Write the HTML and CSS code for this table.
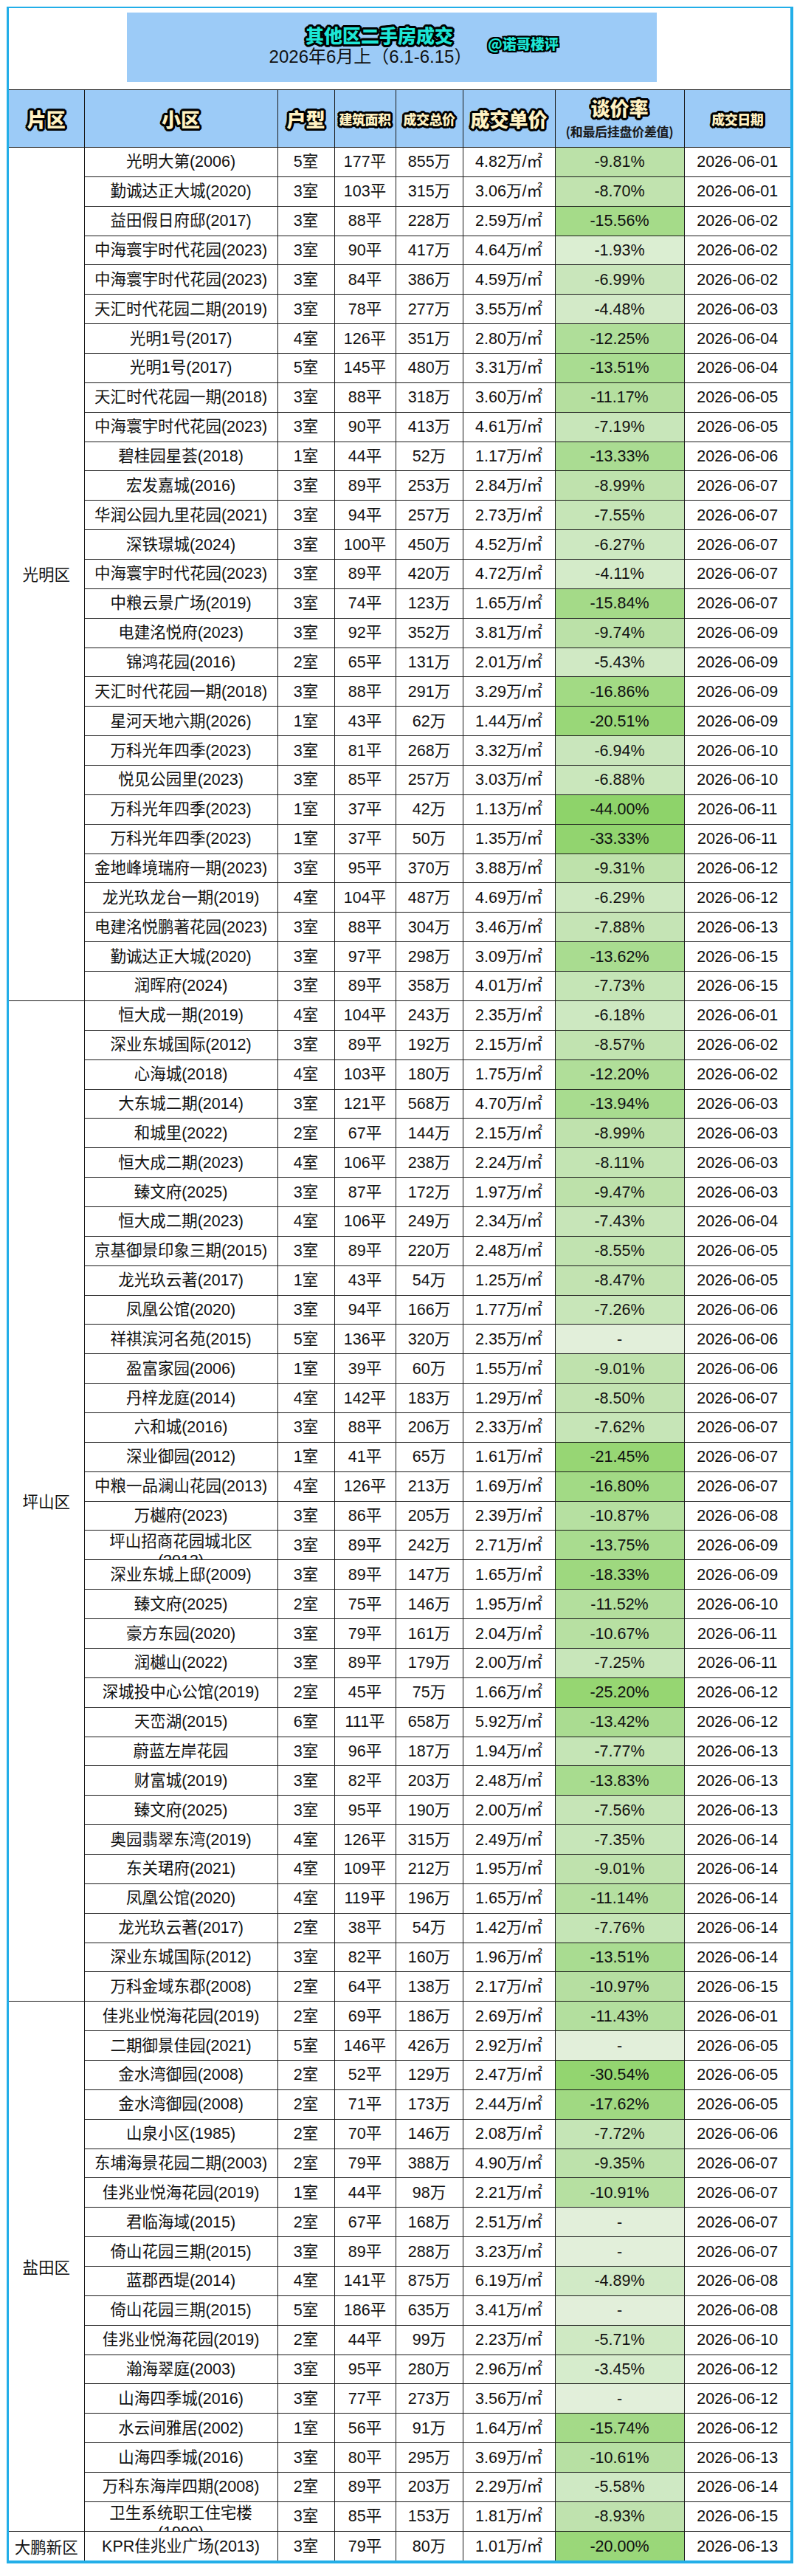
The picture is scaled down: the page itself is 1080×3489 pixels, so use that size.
FILE: index.html
```html
<!DOCTYPE html>
<html lang="zh-CN">
<head>
<meta charset="utf-8">
<title>其他区二手房成交</title>
<link rel="stylesheet" href="styles.css">
</head>
<body>
<div class="frame">
  <div class="title-area">
    <div class="title-box">
      <div class="title-text">
        <div class="title-main">其他区二手房成交</div>
        <div class="title-date">2026年6月上（6.1-6.15）</div>
      </div>
      <div class="mark">@诺哥楼评</div>
    </div>
  </div>
  <table class="sheet">
    <colgroup>
      <col class="c1"><col class="c2"><col class="c3"><col class="c4"><col class="c5"><col class="c6"><col class="c7"><col class="c8">
    </colgroup>
    <thead>
      <tr>
        <th class="d"><span class="hl">片区</span></th>
        <th><span class="hl">小区</span></th>
        <th><span class="hl">户型</span></th>
        <th><span class="hs">建筑面积</span></th>
        <th><span class="hs">成交总价</span></th>
        <th><span class="hl">成交单价</span></th>
        <th><span class="hl hl2">谈价率</span><span class="hsub">(和最后挂盘价差值)</span></th>
        <th><span class="hs">成交日期</span></th>
      </tr>
    </thead>
    <tbody>
      <tr><td class="d" rowspan="29">光明区</td><td>光明大第(2006)</td><td>5室</td><td>177平</td><td>855万</td><td>4.82万/㎡</td><td class="p">-9.81%</td><td>2026-06-01</td></tr>
      <tr><td>勤诚达正大城(2020)</td><td>3室</td><td>103平</td><td>315万</td><td>3.06万/㎡</td><td class="p">-8.70%</td><td>2026-06-01</td></tr>
      <tr><td>益田假日府邸(2017)</td><td>3室</td><td>88平</td><td>228万</td><td>2.59万/㎡</td><td class="p">-15.56%</td><td>2026-06-02</td></tr>
      <tr><td>中海寰宇时代花园(2023)</td><td>3室</td><td>90平</td><td>417万</td><td>4.64万/㎡</td><td class="p">-1.93%</td><td>2026-06-02</td></tr>
      <tr><td>中海寰宇时代花园(2023)</td><td>3室</td><td>84平</td><td>386万</td><td>4.59万/㎡</td><td class="p">-6.99%</td><td>2026-06-02</td></tr>
      <tr><td>天汇时代花园二期(2019)</td><td>3室</td><td>78平</td><td>277万</td><td>3.55万/㎡</td><td class="p">-4.48%</td><td>2026-06-03</td></tr>
      <tr><td>光明1号(2017)</td><td>4室</td><td>126平</td><td>351万</td><td>2.80万/㎡</td><td class="p">-12.25%</td><td>2026-06-04</td></tr>
      <tr><td>光明1号(2017)</td><td>5室</td><td>145平</td><td>480万</td><td>3.31万/㎡</td><td class="p">-13.51%</td><td>2026-06-04</td></tr>
      <tr><td>天汇时代花园一期(2018)</td><td>3室</td><td>88平</td><td>318万</td><td>3.60万/㎡</td><td class="p">-11.17%</td><td>2026-06-05</td></tr>
      <tr><td>中海寰宇时代花园(2023)</td><td>3室</td><td>90平</td><td>413万</td><td>4.61万/㎡</td><td class="p">-7.19%</td><td>2026-06-05</td></tr>
      <tr><td>碧桂园星荟(2018)</td><td>1室</td><td>44平</td><td>52万</td><td>1.17万/㎡</td><td class="p">-13.33%</td><td>2026-06-06</td></tr>
      <tr><td>宏发嘉城(2016)</td><td>3室</td><td>89平</td><td>253万</td><td>2.84万/㎡</td><td class="p">-8.99%</td><td>2026-06-07</td></tr>
      <tr><td>华润公园九里花园(2021)</td><td>3室</td><td>94平</td><td>257万</td><td>2.73万/㎡</td><td class="p">-7.55%</td><td>2026-06-07</td></tr>
      <tr><td>深铁璟城(2024)</td><td>3室</td><td>100平</td><td>450万</td><td>4.52万/㎡</td><td class="p">-6.27%</td><td>2026-06-07</td></tr>
      <tr><td>中海寰宇时代花园(2023)</td><td>3室</td><td>89平</td><td>420万</td><td>4.72万/㎡</td><td class="p">-4.11%</td><td>2026-06-07</td></tr>
      <tr><td>中粮云景广场(2019)</td><td>3室</td><td>74平</td><td>123万</td><td>1.65万/㎡</td><td class="p">-15.84%</td><td>2026-06-07</td></tr>
      <tr><td>电建洺悦府(2023)</td><td>3室</td><td>92平</td><td>352万</td><td>3.81万/㎡</td><td class="p">-9.74%</td><td>2026-06-09</td></tr>
      <tr><td>锦鸿花园(2016)</td><td>2室</td><td>65平</td><td>131万</td><td>2.01万/㎡</td><td class="p">-5.43%</td><td>2026-06-09</td></tr>
      <tr><td>天汇时代花园一期(2018)</td><td>3室</td><td>88平</td><td>291万</td><td>3.29万/㎡</td><td class="p">-16.86%</td><td>2026-06-09</td></tr>
      <tr><td>星河天地六期(2026)</td><td>1室</td><td>43平</td><td>62万</td><td>1.44万/㎡</td><td class="p">-20.51%</td><td>2026-06-09</td></tr>
      <tr><td>万科光年四季(2023)</td><td>3室</td><td>81平</td><td>268万</td><td>3.32万/㎡</td><td class="p">-6.94%</td><td>2026-06-10</td></tr>
      <tr><td>悦见公园里(2023)</td><td>3室</td><td>85平</td><td>257万</td><td>3.03万/㎡</td><td class="p">-6.88%</td><td>2026-06-10</td></tr>
      <tr><td>万科光年四季(2023)</td><td>1室</td><td>37平</td><td>42万</td><td>1.13万/㎡</td><td class="p">-44.00%</td><td>2026-06-11</td></tr>
      <tr><td>万科光年四季(2023)</td><td>1室</td><td>37平</td><td>50万</td><td>1.35万/㎡</td><td class="p">-33.33%</td><td>2026-06-11</td></tr>
      <tr><td>金地峰境瑞府一期(2023)</td><td>3室</td><td>95平</td><td>370万</td><td>3.88万/㎡</td><td class="p">-9.31%</td><td>2026-06-12</td></tr>
      <tr><td>龙光玖龙台一期(2019)</td><td>4室</td><td>104平</td><td>487万</td><td>4.69万/㎡</td><td class="p">-6.29%</td><td>2026-06-12</td></tr>
      <tr><td>电建洺悦鹏著花园(2023)</td><td>3室</td><td>88平</td><td>304万</td><td>3.46万/㎡</td><td class="p">-7.88%</td><td>2026-06-13</td></tr>
      <tr><td>勤诚达正大城(2020)</td><td>3室</td><td>97平</td><td>298万</td><td>3.09万/㎡</td><td class="p">-13.62%</td><td>2026-06-15</td></tr>
      <tr><td>润晖府(2024)</td><td>3室</td><td>89平</td><td>358万</td><td>4.01万/㎡</td><td class="p">-7.73%</td><td>2026-06-15</td></tr>

      <tr><td class="d" rowspan="34">坪山区</td><td>恒大成一期(2019)</td><td>4室</td><td>104平</td><td>243万</td><td>2.35万/㎡</td><td class="p">-6.18%</td><td>2026-06-01</td></tr>
      <tr><td>深业东城国际(2012)</td><td>3室</td><td>89平</td><td>192万</td><td>2.15万/㎡</td><td class="p">-8.57%</td><td>2026-06-02</td></tr>
      <tr><td>心海城(2018)</td><td>4室</td><td>103平</td><td>180万</td><td>1.75万/㎡</td><td class="p">-12.20%</td><td>2026-06-02</td></tr>
      <tr><td>大东城二期(2014)</td><td>3室</td><td>121平</td><td>568万</td><td>4.70万/㎡</td><td class="p">-13.94%</td><td>2026-06-03</td></tr>
      <tr><td>和城里(2022)</td><td>2室</td><td>67平</td><td>144万</td><td>2.15万/㎡</td><td class="p">-8.99%</td><td>2026-06-03</td></tr>
      <tr><td>恒大成二期(2023)</td><td>4室</td><td>106平</td><td>238万</td><td>2.24万/㎡</td><td class="p">-8.11%</td><td>2026-06-03</td></tr>
      <tr><td>臻文府(2025)</td><td>3室</td><td>87平</td><td>172万</td><td>1.97万/㎡</td><td class="p">-9.47%</td><td>2026-06-03</td></tr>
      <tr><td>恒大成二期(2023)</td><td>4室</td><td>106平</td><td>249万</td><td>2.34万/㎡</td><td class="p">-7.43%</td><td>2026-06-04</td></tr>
      <tr><td>京基御景印象三期(2015)</td><td>3室</td><td>89平</td><td>220万</td><td>2.48万/㎡</td><td class="p">-8.55%</td><td>2026-06-05</td></tr>
      <tr><td>龙光玖云著(2017)</td><td>1室</td><td>43平</td><td>54万</td><td>1.25万/㎡</td><td class="p">-8.47%</td><td>2026-06-05</td></tr>
      <tr><td>凤凰公馆(2020)</td><td>3室</td><td>94平</td><td>166万</td><td>1.77万/㎡</td><td class="p">-7.26%</td><td>2026-06-06</td></tr>
      <tr><td>祥祺滨河名苑(2015)</td><td>5室</td><td>136平</td><td>320万</td><td>2.35万/㎡</td><td class="p">-</td><td>2026-06-06</td></tr>
      <tr><td>盈富家园(2006)</td><td>1室</td><td>39平</td><td>60万</td><td>1.55万/㎡</td><td class="p">-9.01%</td><td>2026-06-06</td></tr>
      <tr><td>丹梓龙庭(2014)</td><td>4室</td><td>142平</td><td>183万</td><td>1.29万/㎡</td><td class="p">-8.50%</td><td>2026-06-07</td></tr>
      <tr><td>六和城(2016)</td><td>3室</td><td>88平</td><td>206万</td><td>2.33万/㎡</td><td class="p">-7.62%</td><td>2026-06-07</td></tr>
      <tr><td>深业御园(2012)</td><td>1室</td><td>41平</td><td>65万</td><td>1.61万/㎡</td><td class="p">-21.45%</td><td>2026-06-07</td></tr>
      <tr><td>中粮一品澜山花园(2013)</td><td>4室</td><td>126平</td><td>213万</td><td>1.69万/㎡</td><td class="p">-16.80%</td><td>2026-06-07</td></tr>
      <tr><td>万樾府(2023)</td><td>3室</td><td>86平</td><td>205万</td><td>2.39万/㎡</td><td class="p">-10.87%</td><td>2026-06-08</td></tr>
      <tr><td class="wrap"><div class="clip">坪山招商花园城北区<br>(2013)</div></td><td>3室</td><td>89平</td><td>242万</td><td>2.71万/㎡</td><td class="p">-13.75%</td><td>2026-06-09</td></tr>
      <tr><td>深业东城上邸(2009)</td><td>3室</td><td>89平</td><td>147万</td><td>1.65万/㎡</td><td class="p">-18.33%</td><td>2026-06-09</td></tr>
      <tr><td>臻文府(2025)</td><td>2室</td><td>75平</td><td>146万</td><td>1.95万/㎡</td><td class="p">-11.52%</td><td>2026-06-10</td></tr>
      <tr><td>豪方东园(2020)</td><td>3室</td><td>79平</td><td>161万</td><td>2.04万/㎡</td><td class="p">-10.67%</td><td>2026-06-11</td></tr>
      <tr><td>润樾山(2022)</td><td>3室</td><td>89平</td><td>179万</td><td>2.00万/㎡</td><td class="p">-7.25%</td><td>2026-06-11</td></tr>
      <tr><td>深城投中心公馆(2019)</td><td>2室</td><td>45平</td><td>75万</td><td>1.66万/㎡</td><td class="p">-25.20%</td><td>2026-06-12</td></tr>
      <tr><td>天峦湖(2015)</td><td>6室</td><td>111平</td><td>658万</td><td>5.92万/㎡</td><td class="p">-13.42%</td><td>2026-06-12</td></tr>
      <tr><td>蔚蓝左岸花园</td><td>3室</td><td>96平</td><td>187万</td><td>1.94万/㎡</td><td class="p">-7.77%</td><td>2026-06-13</td></tr>
      <tr><td>财富城(2019)</td><td>3室</td><td>82平</td><td>203万</td><td>2.48万/㎡</td><td class="p">-13.83%</td><td>2026-06-13</td></tr>
      <tr><td>臻文府(2025)</td><td>3室</td><td>95平</td><td>190万</td><td>2.00万/㎡</td><td class="p">-7.56%</td><td>2026-06-13</td></tr>
      <tr><td>奥园翡翠东湾(2019)</td><td>4室</td><td>126平</td><td>315万</td><td>2.49万/㎡</td><td class="p">-7.35%</td><td>2026-06-14</td></tr>
      <tr><td>东关珺府(2021)</td><td>4室</td><td>109平</td><td>212万</td><td>1.95万/㎡</td><td class="p">-9.01%</td><td>2026-06-14</td></tr>
      <tr><td>凤凰公馆(2020)</td><td>4室</td><td>119平</td><td>196万</td><td>1.65万/㎡</td><td class="p">-11.14%</td><td>2026-06-14</td></tr>
      <tr><td>龙光玖云著(2017)</td><td>2室</td><td>38平</td><td>54万</td><td>1.42万/㎡</td><td class="p">-7.76%</td><td>2026-06-14</td></tr>
      <tr><td>深业东城国际(2012)</td><td>3室</td><td>82平</td><td>160万</td><td>1.96万/㎡</td><td class="p">-13.51%</td><td>2026-06-14</td></tr>
      <tr><td>万科金域东郡(2008)</td><td>2室</td><td>64平</td><td>138万</td><td>2.17万/㎡</td><td class="p">-10.97%</td><td>2026-06-15</td></tr>

      <tr><td class="d" rowspan="18">盐田区</td><td>佳兆业悦海花园(2019)</td><td>2室</td><td>69平</td><td>186万</td><td>2.69万/㎡</td><td class="p">-11.43%</td><td>2026-06-01</td></tr>
      <tr><td>二期御景佳园(2021)</td><td>5室</td><td>146平</td><td>426万</td><td>2.92万/㎡</td><td class="p">-</td><td>2026-06-05</td></tr>
      <tr><td>金水湾御园(2008)</td><td>2室</td><td>52平</td><td>129万</td><td>2.47万/㎡</td><td class="p">-30.54%</td><td>2026-06-05</td></tr>
      <tr><td>金水湾御园(2008)</td><td>2室</td><td>71平</td><td>173万</td><td>2.44万/㎡</td><td class="p">-17.62%</td><td>2026-06-05</td></tr>
      <tr><td>山泉小区(1985)</td><td>2室</td><td>70平</td><td>146万</td><td>2.08万/㎡</td><td class="p">-7.72%</td><td>2026-06-06</td></tr>
      <tr><td>东埔海景花园二期(2003)</td><td>2室</td><td>79平</td><td>388万</td><td>4.90万/㎡</td><td class="p">-9.35%</td><td>2026-06-07</td></tr>
      <tr><td>佳兆业悦海花园(2019)</td><td>1室</td><td>44平</td><td>98万</td><td>2.21万/㎡</td><td class="p">-10.91%</td><td>2026-06-07</td></tr>
      <tr><td>君临海域(2015)</td><td>2室</td><td>67平</td><td>168万</td><td>2.51万/㎡</td><td class="p">-</td><td>2026-06-07</td></tr>
      <tr><td>倚山花园三期(2015)</td><td>3室</td><td>89平</td><td>288万</td><td>3.23万/㎡</td><td class="p">-</td><td>2026-06-07</td></tr>
      <tr><td>蓝郡西堤(2014)</td><td>4室</td><td>141平</td><td>875万</td><td>6.19万/㎡</td><td class="p">-4.89%</td><td>2026-06-08</td></tr>
      <tr><td>倚山花园三期(2015)</td><td>5室</td><td>186平</td><td>635万</td><td>3.41万/㎡</td><td class="p">-</td><td>2026-06-08</td></tr>
      <tr><td>佳兆业悦海花园(2019)</td><td>2室</td><td>44平</td><td>99万</td><td>2.23万/㎡</td><td class="p">-5.71%</td><td>2026-06-10</td></tr>
      <tr><td>瀚海翠庭(2003)</td><td>3室</td><td>95平</td><td>280万</td><td>2.96万/㎡</td><td class="p">-3.45%</td><td>2026-06-12</td></tr>
      <tr><td>山海四季城(2016)</td><td>3室</td><td>77平</td><td>273万</td><td>3.56万/㎡</td><td class="p">-</td><td>2026-06-12</td></tr>
      <tr><td>水云间雅居(2002)</td><td>1室</td><td>56平</td><td>91万</td><td>1.64万/㎡</td><td class="p">-15.74%</td><td>2026-06-12</td></tr>
      <tr><td>山海四季城(2016)</td><td>3室</td><td>80平</td><td>295万</td><td>3.69万/㎡</td><td class="p">-10.61%</td><td>2026-06-13</td></tr>
      <tr><td>万科东海岸四期(2008)</td><td>2室</td><td>89平</td><td>203万</td><td>2.29万/㎡</td><td class="p">-5.58%</td><td>2026-06-14</td></tr>
      <tr><td class="wrap"><div class="clip">卫生系统职工住宅楼<br>(1990)</div></td><td>3室</td><td>85平</td><td>153万</td><td>1.81万/㎡</td><td class="p">-8.93%</td><td>2026-06-15</td></tr>

      <tr><td class="d">大鹏新区</td><td>KPR佳兆业广场(2013)</td><td>3室</td><td>79平</td><td>80万</td><td>1.01万/㎡</td><td class="p">-20.00%</td><td>2026-06-13</td></tr>
    </tbody>
  </table>
</div>
<script src="script.js"></script>
</body>
</html>
```

FILE: styles.css
```css
html, body {
  margin: 0;
  padding: 0;
  background: #ffffff;
}

body {
  font-family: "Liberation Sans", "Noto Sans CJK SC", sans-serif;
  color: #111111;
}

.frame {
  margin: 9px 0 0 9px;
  width: 1066px;
  box-sizing: border-box;
  border-style: solid;
  border-color: #22aee8;
  border-width: 2px 4px 4px 3px;
}

.title-area {
  height: 110px;
  box-sizing: border-box;
  padding: 6px 0 0 160px;
}

.title-box {
  position: relative;
  width: 718px;
  height: 94px;
  background: #9ccbf7;
}

.title-text {
  display: flex;
  flex-direction: column;
  align-items: center;
  padding: 15px 58px 0 0;
}

.title-main {
  padding-left: 24px;
  font-family: "Noto Sans CJK SC", sans-serif;
  font-weight: 900;
  font-size: 25px;
  line-height: 31px;
  color: #1de6d6;
  text-shadow:
    2px 0 0 #000, -2px 0 0 #000, 0 2px 0 #000, 0 -2px 0 #000,
    2px 2px 0 #000, -2px -2px 0 #000, 2px -2px 0 #000, -2px 2px 0 #000,
    3px 1px 0 #000, -3px 1px 0 #000, 1px 3px 0 #000, 1px -3px 0 #000,
    3px -1px 0 #000, -3px -1px 0 #000, -1px 3px 0 #000, -1px -3px 0 #000;
}

.title-date {
  font-family: "Liberation Sans", "Noto Sans CJK SC", sans-serif;
  font-size: 24px;
  line-height: 28px;
  color: #111111;
}

.mark {
  position: absolute;
  left: 489px;
  top: 30px;
  font-family: "Noto Sans CJK SC", sans-serif;
  font-weight: 900;
  font-size: 19px;
  line-height: 24px;
  color: #1de6d6;
  text-shadow:
    2px 0 0 #000, -2px 0 0 #000, 0 2px 0 #000, 0 -2px 0 #000,
    2px 2px 0 #000, -2px -2px 0 #000, 2px -2px 0 #000, -2px 2px 0 #000;
}

.sheet {
  width: 100%;
  border-collapse: collapse;
  table-layout: fixed;
}

.c1 { width: 102px; }
.c2 { width: 262px; }
.c3 { width: 77px; }
.c4 { width: 83px; }
.c5 { width: 91px; }
.c6 { width: 125px; }
.c7 { width: 175px; }
.c8 { width: 144px; }

.sheet th,
.sheet td {
  border: 1px solid #1a1a1a;
  padding: 0 2px;
  text-align: center;
  vertical-align: middle;
  white-space: nowrap;
  overflow: hidden;
}

.sheet th:first-child,
.sheet td.d {
  border-left: none;
}

.sheet th:last-child,
.sheet td:last-child {
  border-right: none;
}

.sheet tbody tr:last-child td {
  border-bottom: none;
}

.sheet thead tr {
  height: 78px;
}

.sheet th {
  background: #9ccbf7;
  font-family: "Noto Sans CJK SC", sans-serif;
  font-weight: 900;
  padding: 0;
}

.hl,
.hs {
  display: block;
  color: #fff2c2;
  text-shadow:
    2px 0 0 #000, -2px 0 0 #000, 0 2px 0 #000, 0 -2px 0 #000,
    2px 2px 0 #000, -2px -2px 0 #000, 2px -2px 0 #000, -2px 2px 0 #000,
    3px 1px 0 #000, -3px 1px 0 #000, 1px 3px 0 #000, 1px -3px 0 #000,
    3px -1px 0 #000, -3px -1px 0 #000, -1px 3px 0 #000, -1px -3px 0 #000;
}

.hl {
  font-size: 26px;
  line-height: 34px;
}

.hl2 {
  margin-top: -4px;
}

.hs {
  font-size: 18px;
  line-height: 26px;
  letter-spacing: -0.5px;
}

.hsub {
  display: block;
  margin-top: 4px;
  font-size: 17px;
  line-height: 22px;
  font-weight: 700;
  color: #1a1a1a;
  letter-spacing: -0.3px;
}

.sheet tbody tr {
  height: 39.87px;
}

.sheet td {
  font-size: 21.5px;
  line-height: 26px;
  background: #ffffff;
}

.sheet td.d {
  font-family: "Noto Sans CJK SC", sans-serif;
  font-size: 21.5px;
}

.sheet td.p {
  background: #e2efda;
}

.sheet td.wrap {
  vertical-align: top;
  padding: 0;
}

.clip {
  height: 39px;
  overflow: hidden;
  white-space: normal;
  box-sizing: border-box;
  padding-top: 2px;
  line-height: 26px;
}
```

FILE: script.js
```js
(function () {
  var anchors = [
    [0, [226, 240, 218]],
    [6.2, [205, 232, 193]],
    [9, [191, 226, 173]],
    [13.6, [169, 220, 144]],
    [21.5, [151, 214, 116]],
    [44, [142, 211, 106]]
  ];
  function colorFor(v) {
    if (v <= anchors[0][0]) return anchors[0][1];
    for (var i = 1; i < anchors.length; i++) {
      if (v <= anchors[i][0]) {
        var a = anchors[i - 1], b = anchors[i];
        var t = (v - a[0]) / (b[0] - a[0]);
        return [0, 1, 2].map(function (k) {
          return Math.round(a[1][k] + (b[1][k] - a[1][k]) * t);
        });
      }
    }
    return anchors[anchors.length - 1][1];
  }
  var cells = document.querySelectorAll('td.p');
  for (var i = 0; i < cells.length; i++) {
    var txt = cells[i].textContent.trim();
    var v = Math.abs(parseFloat(txt));
    if (isNaN(v)) continue;
    var c = colorFor(v);
    cells[i].style.backgroundColor = 'rgb(' + c.join(',') + ')';
  }
})();
```
